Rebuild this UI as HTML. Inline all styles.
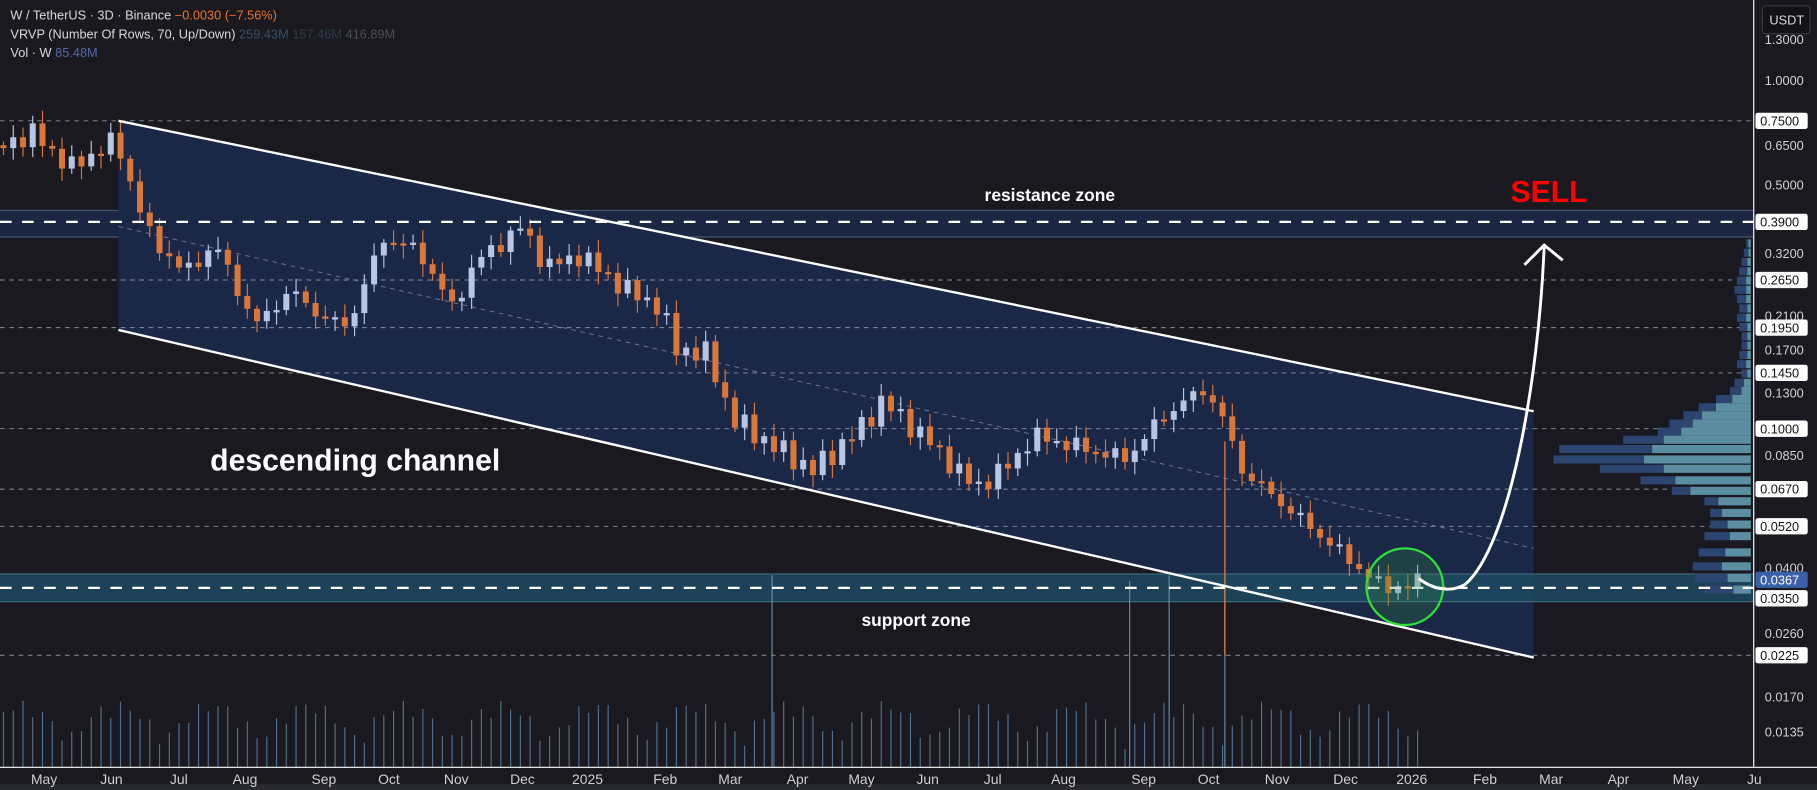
<!DOCTYPE html>
<html><head><meta charset="utf-8"><style>
html,body{margin:0;padding:0;background:#19191f;overflow:hidden}
svg{display:block}
text{font-family:"Liberation Sans",sans-serif}
</style></head><body>
<svg id="s" width="1817" height="790" viewBox="0 0 1565 680" preserveAspectRatio="none" xmlns="http://www.w3.org/2000/svg">
<rect width="1565" height="680" fill="#19191f"/>
<rect x="0" y="181" width="1510" height="23" fill="#1b2642"/>
<line x1="0" y1="181" x2="1510" y2="181" stroke="#55607a" stroke-width="0.8"/>
<line x1="0" y1="204" x2="1510" y2="204" stroke="#55607a" stroke-width="0.8"/>
<polygon points="102,104 1321,354 1321,566 102,284" fill="#1a2747"/>
<rect x="0" y="494" width="1510" height="24" fill="#1f4a62" opacity="0.85"/>
<line x1="0" y1="494" x2="1510" y2="494" stroke="#4b7b90" stroke-width="0.8"/>
<line x1="0" y1="518" x2="1510" y2="518" stroke="#4b7b90" stroke-width="0.8"/>
<g stroke="#8a8f9c" stroke-width="0.8" stroke-dasharray="4,4">
<line x1="0" y1="104" x2="1510" y2="104"/><line x1="0" y1="241" x2="1510" y2="241"/>
<line x1="0" y1="282" x2="1510" y2="282"/><line x1="0" y1="321" x2="1510" y2="321"/>
<line x1="0" y1="369" x2="1510" y2="369"/><line x1="0" y1="421" x2="1510" y2="421"/>
<line x1="0" y1="453" x2="1510" y2="453"/><line x1="0" y1="564" x2="1510" y2="564"/>
</g>
<line x1="102" y1="195" x2="1321" y2="472" stroke="#6d7894" stroke-width="0.8" stroke-dasharray="4,4"/>
<g id="vr"></g>
<g id="vol"></g>
<g id="cd"></g>
<line x1="102" y1="104" x2="1321" y2="354" stroke="#fff" stroke-width="2"/>
<line x1="102" y1="284" x2="1321" y2="566" stroke="#fff" stroke-width="2"/>
<line x1="0" y1="191" x2="1510" y2="191" stroke="#fff" stroke-width="2" stroke-dasharray="10,9"/>
<line x1="0" y1="506" x2="1510" y2="506" stroke="#fff" stroke-width="2" stroke-dasharray="10,9"/>
<circle cx="1210" cy="505" r="33" fill="#2e8a3a" fill-opacity="0.25" stroke="#2fe03a" stroke-width="2"/>
<path d="M1222,498 C1235,508 1250,510 1262,503 C1300,470 1325,330 1330,213" fill="none" stroke="#fff" stroke-width="2.5"/>
<path d="M1313,228 L1330,211 L1346,224" fill="none" stroke="#fff" stroke-width="2.5"/>
<text x="181" y="405" fill="#fff" font-size="26" font-weight="bold">descending channel</text>
<text x="848" y="173" fill="#fff" font-size="15" font-weight="bold">resistance zone</text>
<text x="742" y="539" fill="#fff" font-size="15" font-weight="bold">support zone</text>
<text x="1301" y="174" fill="#f00" font-size="26" font-weight="bold">SELL</text>
<text x="9" y="17" font-size="11" fill="#d8d9de">W / TetherUS · 3D · Binance <tspan fill="#e8742a">−0.0030 (−7.56%)</tspan></text>
<text x="9" y="33" font-size="11" fill="#d8d9de">VRVP (Number Of Rows, 70, Up/Down) <tspan fill="#3b5066">259.43M</tspan> <tspan fill="#2f3d4c">157.46M</tspan> <tspan fill="#4d5058">416.89M</tspan></text>
<text x="9" y="49" font-size="11" fill="#d8d9de">Vol · W <tspan fill="#4f6aa6">85.48M</tspan></text>
<rect x="1511" y="0" width="54" height="680" fill="#19191f"/>
<line x1="1510.5" y1="0" x2="1510.5" y2="660" stroke="#fff" stroke-width="1"/>
<line x1="0" y1="660.5" x2="1565" y2="660.5" stroke="#fff" stroke-width="1"/>
<rect x="0" y="675" width="1565" height="5" fill="#2a2a32"/>
<rect x="1518" y="5" width="41" height="24" rx="3" fill="#121217" stroke="#3a3a44"/>
<text x="1524" y="21" font-size="11" fill="#d8d9de">USDT</text>
<g id="pl" font-size="11"></g>
<g font-size="12" fill="#d0d1d6" text-anchor="middle">
<text x="38" y="675">May</text><text x="96" y="675">Jun</text><text x="154" y="675">Jul</text><text x="211" y="675">Aug</text><text x="279" y="675">Sep</text><text x="335" y="675">Oct</text><text x="393" y="675">Nov</text><text x="450" y="675">Dec</text><text x="506" y="675">2025</text><text x="573" y="675">Feb</text><text x="629" y="675">Mar</text><text x="687" y="675">Apr</text><text x="742" y="675">May</text><text x="799" y="675">Jun</text><text x="855" y="675">Jul</text><text x="916" y="675">Aug</text><text x="985" y="675">Sep</text><text x="1041" y="675">Oct</text><text x="1100" y="675">Nov</text><text x="1159" y="675">Dec</text><text x="1216" y="675">2026</text><text x="1279" y="675">Feb</text><text x="1336" y="675">Mar</text><text x="1394" y="675">Apr</text><text x="1452" y="675">May</text><text x="1511" y="675">Ju</text>
</g>
</svg>
<script>
(function(){
var NS="http://www.w3.org/2000/svg";
function el(p,t,a){var e=document.createElementNS(NS,t);for(var k in a)e.setAttribute(k,a[k]);p.appendChild(e);return e;}
var pts=[[0,125],[30,115],[60,145],[100,120],[115,165],[130,205],[160,235],[185,210],[220,280],[250,250],[280,275],[300,280],[330,205],[360,215],[390,265],[410,225],[450,195],[470,230],[500,220],[540,250],[570,265],[580,300],[610,305],[630,360],[660,380],[700,405],[740,370],[760,345],[800,380],[840,420],[870,400],[890,375],[930,385],[970,395],[1000,360],[1020,345],[1040,335],[1055,365],[1070,405],[1100,430],[1130,455],[1160,480],[1190,505],[1215,505],[1228,495]];
function f(x){for(var i=1;i<pts.length;i++){if(x<=pts[i][0]){var a=pts[i-1],b=pts[i];return a[1]+(b[1]-a[1])*(x-a[0])/(b[0]-a[0]);}}return pts[pts.length-1][1];}
var cd=document.getElementById('cd'),vol=document.getElementById('vol');
var prev=f(0);
for(var x=3;x<=1228;x+=8.4){
 var c=f(x)+Math.sin(x*0.37)*7+Math.sin(x*1.3)*4;
 var o=prev;prev=c;
 var up=c<o,col=up?'#b7c6e5':'#d9773a';
 var tp=Math.min(o,c),bt=Math.max(o,c);if(bt-tp<2)bt=tp+2;
 var w1=3+Math.abs(Math.sin(x*2.1))*8,w2=3+Math.abs(Math.cos(x*1.7))*8;
 el(cd,'line',{x1:x,x2:x,y1:tp-w1,y2:bt+w2,stroke:col,'stroke-width':1});
 el(cd,'rect',{x:x-2.6,y:tp,width:5.2,height:bt-tp,fill:col});
 var h=12+Math.abs(Math.sin(x*0.71))*30+Math.abs(Math.sin(x*0.23))*15;
 el(vol,'line',{x1:x,x2:x,y1:660,y2:660-h,stroke:'#52708c','stroke-width':1});
}
[[665,165],[973,160],[1007,165],[1055,158]].forEach(function(v){el(vol,'line',{x1:v[0],x2:v[0],y1:660,y2:660-v[1],stroke:'#6a8aa8','stroke-width':1});});
el(cd,'line',{x1:1055,x2:1055,y1:380,y2:564,stroke:'#d9773a','stroke-width':1.2});
var vr=document.getElementById('vr');
var bars=[[206,4,2],[214,6,2],[222,8,3],[230,10,3],[238,12,4],[246,14,4],[254,12,4],[262,10,3],[270,12,4],[278,10,3],[286,8,3],[294,8,3],[302,10,3],[310,12,4],[318,8,3],[326,14,6],[333,18,8],[340,30,16],[347,45,30],[354,58,42],[361,70,50],[368,80,60],[375,110,75],[383,165,85],[392,170,92],[400,130,75],[410,95,65],[419,68,52],[428,40,28],[438,35,25],[448,35,20],[458,40,18],[472,45,22],[484,50,25],[494,48,20],[504,40,15]];
bars.forEach(function(b){el(vr,'rect',{x:1508-b[1],y:b[0],width:b[1]-b[2],height:7,fill:'#2c4470'});el(vr,'rect',{x:1508-b[2],y:b[0],width:b[2],height:7,fill:'#5a8ea0'});});
var pl=document.getElementById('pl');
[["1.3000",34],["1.0000",69],["0.6500",125],["0.5000",159],["0.3200",218],["0.2100",272],["0.1700",301],["0.1300",338],["0.0850",392],["0.0400",489],["0.0260",545],["0.0170",600],["0.0135",630]].forEach(function(p){var t=el(pl,'text',{x:1520,y:p[1]+4,fill:'#d0d1d6'});t.textContent=p[0];});
[["0.7500",104],["0.3900",191],["0.2650",241],["0.1950",282],["0.1450",321],["0.1000",369],["0.0670",421],["0.0520",453],["0.0350",515],["0.0225",564]].forEach(function(p){el(pl,'rect',{x:1512,y:p[1]-7,width:45,height:14,fill:'#fff',rx:2});var t=el(pl,'text',{x:1516,y:p[1]+4,fill:'#111'});t.textContent=p[0];});
el(pl,'rect',{x:1512,y:492,width:45,height:14,fill:'#3b5fa8',rx:2});
var t=el(pl,'text',{x:1516,y:503,fill:'#fff'});t.textContent="0.0367";
})();
</script>
</body></html>
